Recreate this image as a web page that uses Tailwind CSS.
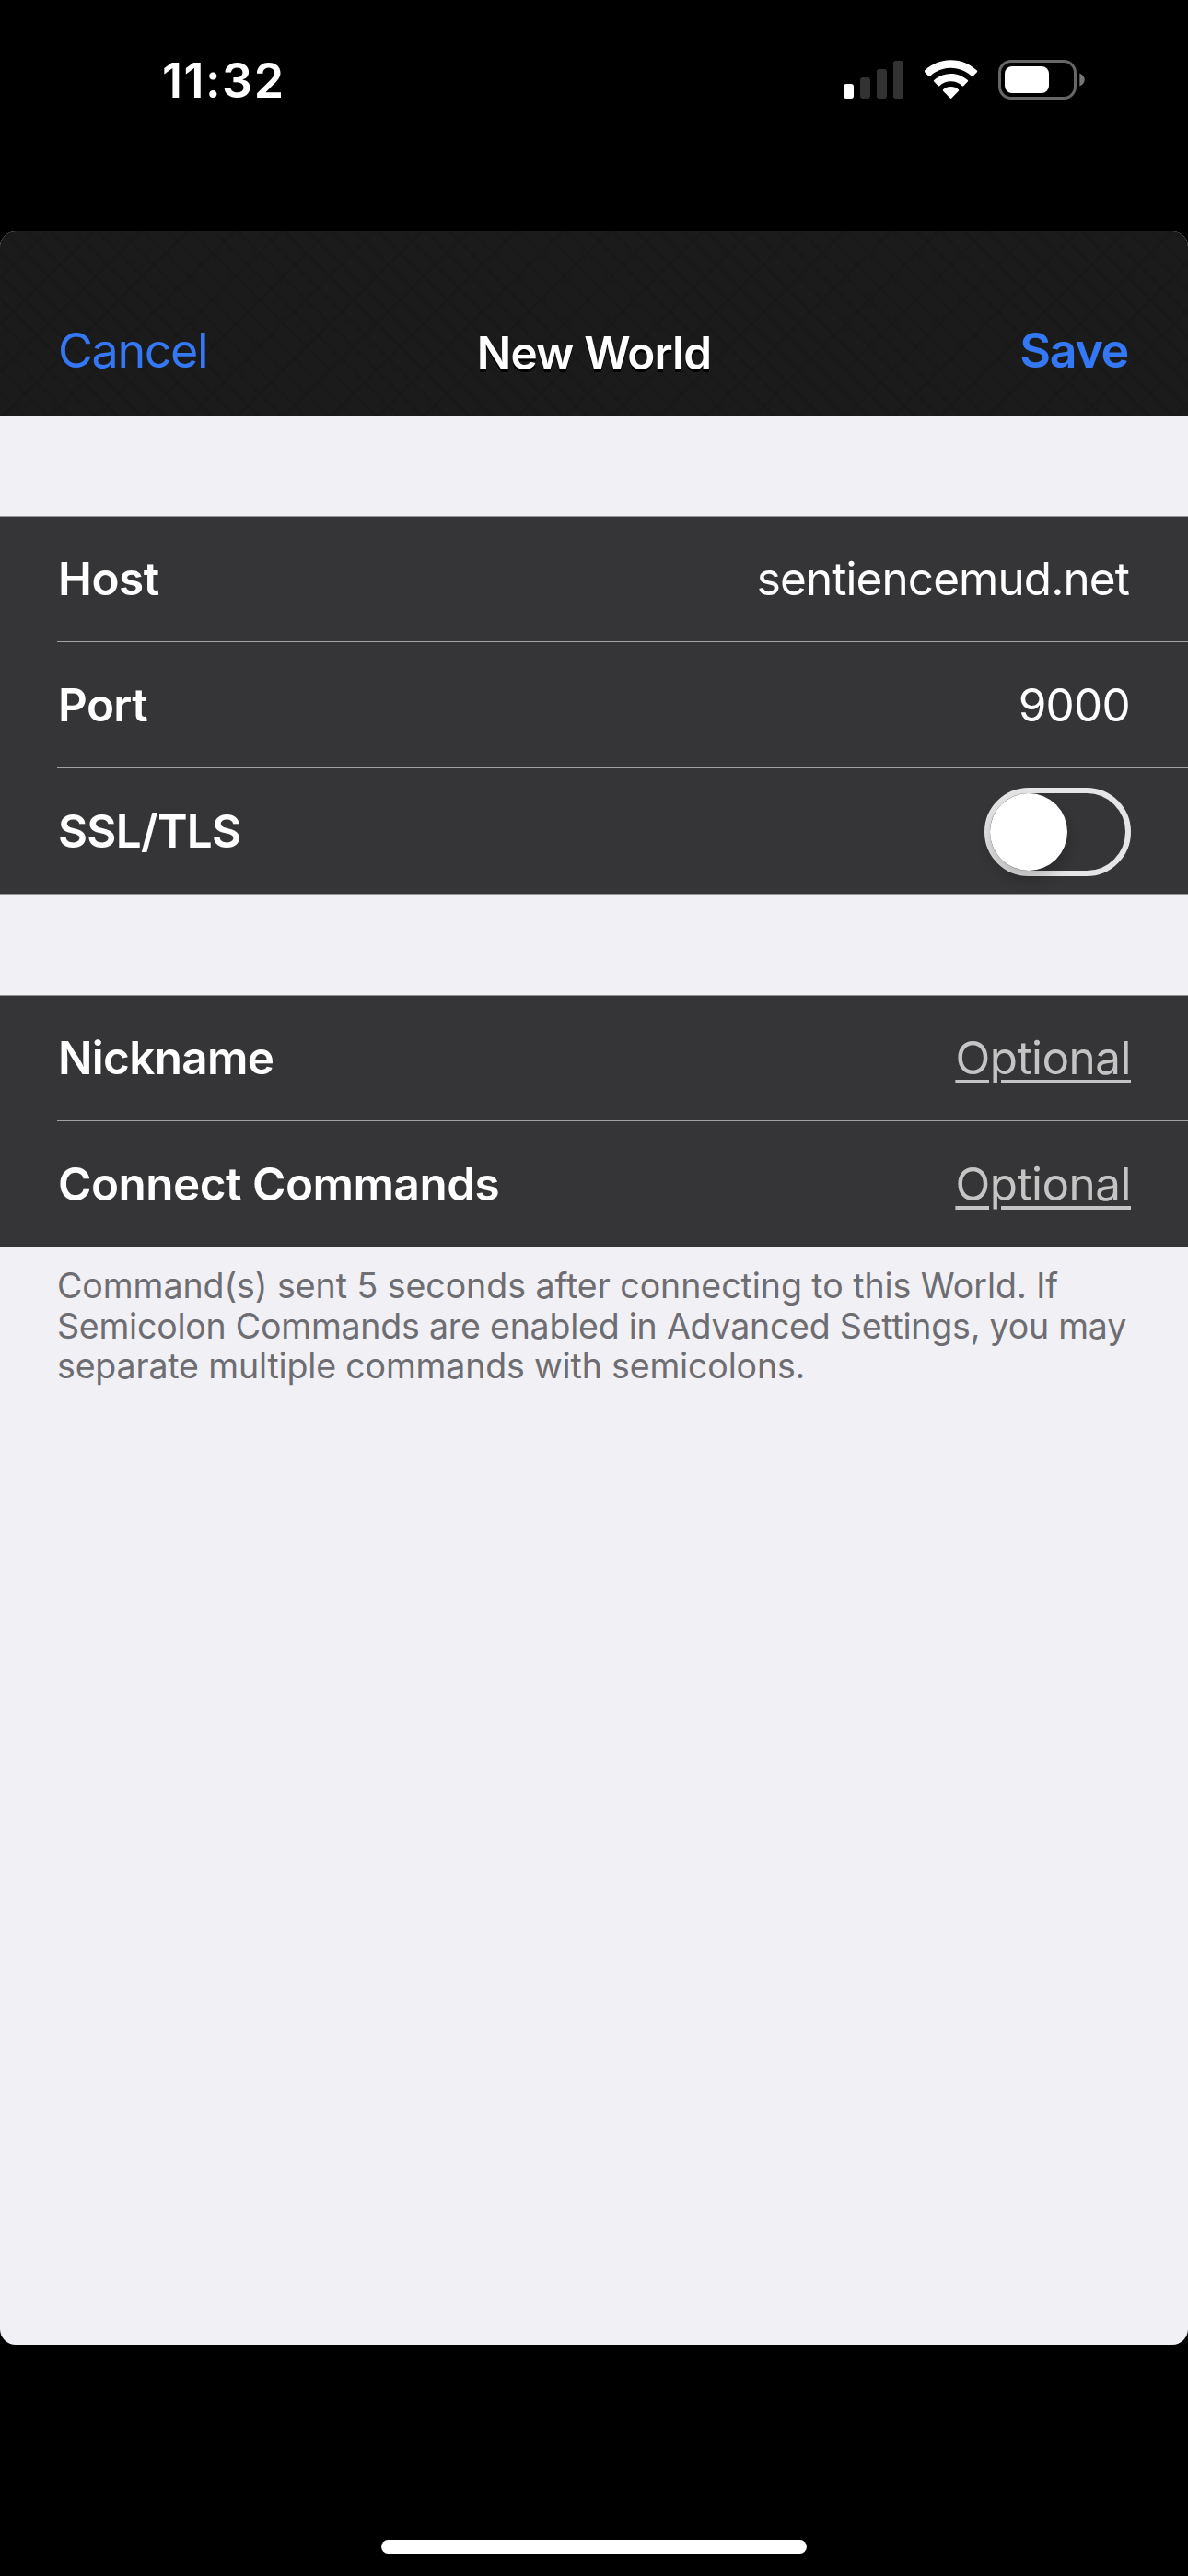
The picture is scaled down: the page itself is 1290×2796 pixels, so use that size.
<!DOCTYPE html>
<html lang="en">
<head>
<meta charset="utf-8">
<title>New World</title>
<script src="https://cdn.jsdelivr.net/npm/@tailwindcss/browser@4"></script>
</head>
<body class="bg-black font-['Inter',sans-serif]">
<div class="flex h-[2796px] w-[1290px] flex-col overflow-hidden bg-black">

  <!-- Status bar -->
  <div class="flex h-[176px] shrink-0 items-center justify-between pl-[176px] pr-[112px] text-white">
    <span class="text-[52px] font-semibold leading-[60px] tracking-[1.5px]">11:32</span>
    <div class="mb-[2px] flex h-11 items-start">
      <svg class="mr-[22px] h-11 w-[66px]" viewBox="0 0 66 44">
        <rect x="0" y="26" width="11" height="16" rx="3" fill="#fff"/>
        <rect x="18" y="19" width="11" height="23" rx="3" fill="#323232"/>
        <rect x="36" y="10" width="11" height="32" rx="3" fill="#323232"/>
        <rect x="54" y="1" width="11" height="41" rx="3" fill="#323232"/>
      </svg>
      <svg class="mr-[22px] h-11 w-[58px]" viewBox="0 0 58 44" fill="#fff">
        <path d="M28.500 0.200C39.800 0.200 49.600 4.600 56.900 11.600Q57.700 12.400 56.900 13.200L52.600 17.700Q51.900 18.400 51.100 17.700C45.200 12.200 37.300 8.700 28.500 8.700S11.800 12.200 5.900 17.700Q5.100 18.400 4.400 17.700L0.100 13.200Q-0.700 12.400 0.100 11.600C7.400 4.600 17.200 0.200 28.500 0.200Z"/>
        <path d="M28.500 14.900C35.700 14.900 42 17.600 46.800 22Q47.600 22.800 46.800 23.600L42.300 28.200Q41.600 28.900 40.800 28.200C37.500 25.200 33.200 23.300 28.500 23.300S19.500 25.200 16.200 28.200Q15.400 28.900 14.700 28.200L10.200 23.600Q9.400 22.800 10.200 22C15 17.600 21.300 14.900 28.500 14.900Z"/>
        <path d="M28.500 29C31.700 29 34.600 30.200 36.900 32.200Q37.700 33 36.900 33.800L29.300 41.500Q28.500 42.300 27.700 41.500L20.100 33.800Q19.300 33 20.100 32.200C22.400 30.200 25.300 29 28.500 29Z"/>
      </svg>
      <svg class="h-11 w-[94px]" viewBox="0 0 94 44">
        <rect x="1.500" y="1.500" width="82" height="40" rx="12.500" fill="none" stroke="#666" stroke-width="3"/>
        <rect x="7" y="7" width="48" height="29" rx="8" fill="#fff"/>
        <path d="M88.300 14.500C91.500 15.800 93.700 18.400 93.700 21.500S91.500 27.200 88.300 28.500Z" fill="#777"/>
      </svg>
    </div>
  </div>

  <!-- Modal sheet -->
  <main class="mt-[75px] flex h-[2294px] shrink-0 flex-col overflow-hidden rounded-[17px] bg-[#f1f0f5]">
    <header class="h-[200px] shrink-0 bg-[#1b1b1b] bg-[repeating-linear-gradient(45deg,rgba(0,0,0,0.1)_0px,transparent_3px,transparent_15px,rgba(0,0,0,0.1)_18px),repeating-linear-gradient(135deg,rgba(0,0,0,0.1)_0px,transparent_3px,transparent_33px,rgba(0,0,0,0.1)_36px)] pl-[63px] pr-[65px] pt-[98px]">
      <div class="grid h-[60px] grid-cols-[1fr_auto_1fr] items-center">
        <a class="text-[52px] leading-[60px] tracking-[-1.390px] text-[#3478f6]">Cancel</a>
        <h1 class="mt-1 pl-[2px] text-[49.400px] font-semibold leading-[60px] tracking-[-0.850px] text-white [text-shadow:0_3px_0_#000]">New World</h1>
        <a class="text-right text-[52px] font-semibold leading-[60px] tracking-[-1.360px] text-[#3478f6]">Save</a>
      </div>
    </header>
    <div class="h-px shrink-0 bg-[#b5b4b8]"></div>

    <!-- Connection -->
    <section class="mt-[108px] bg-[#353537] text-[49.400px] leading-[60px] text-white">
      <div class="h-px bg-[#96969a]"></div>
      <div class="flex h-[135px] items-center justify-between pb-px pl-[63px] pr-[64px]">
        <span class="font-semibold tracking-[-0.440px]">Host</span>
        <span class="tracking-[-0.880px]">sentiencemud.net</span>
      </div>
      <div class="ml-[62px] h-px bg-[#a2a2a5]"></div>
      <div class="flex h-[136px] items-center justify-between px-[63px]">
        <span class="font-semibold tracking-[-0.600px]">Port</span>
        <span class="tracking-[-0.700px]">9000</span>
      </div>
      <div class="ml-[62px] h-px bg-[#a2a2a5]"></div>
      <div class="flex h-[136px] items-center justify-between pl-[63px] pr-[62px]">
        <span class="font-semibold tracking-[-0.750px]">SSL/TLS</span>
        <svg class="mt-[2px] block h-24 w-[159px] overflow-visible" viewBox="0 0 159 96">
          <defs>
            <filter id="soft" x="-50%" y="-50%" width="200%" height="200%"><feGaussianBlur stdDeviation="8"/></filter>
          </defs>
          <rect x="3" y="3" width="153" height="90" rx="45" fill="none" stroke="#e5e5e5" stroke-width="6"/>
          <circle cx="48" cy="57" r="42" fill="#000" opacity=".2" filter="url(#soft)"/>
          <circle cx="48" cy="48" r="42" fill="#fff"/>
        </svg>
      </div>
      <div class="h-px bg-[#96969a]"></div>
    </section>

    <!-- Details -->
    <section class="mt-[109px] bg-[#353537] text-[49.400px] leading-[60px] text-white">
      <div class="h-px bg-[#8d918e]"></div>
      <div class="flex h-[135px] items-center justify-between pb-px pl-[63px] pr-[62px]">
        <span class="font-semibold tracking-[-0.670px]">Nickname</span>
        <span class="tracking-[-0.500px] text-[#c4c4c4] underline decoration-4 underline-offset-[6px]">Optional</span>
      </div>
      <div class="ml-[62px] h-px bg-[#a2a2a5]"></div>
      <div class="flex h-[136px] items-center justify-between pl-[63px] pr-[62px]">
        <span class="font-semibold tracking-[-0.470px]">Connect Commands</span>
        <span class="tracking-[-0.500px] text-[#c4c4c4] underline decoration-4 underline-offset-[6px]">Optional</span>
      </div>
      <div class="h-px bg-[#96969a]"></div>
    </section>

    <p class="flex flex-col whitespace-nowrap pl-[62px] pt-[20px] text-[37.500px] leading-[43.600px] text-[#6d6d72]">
      <span class="tracking-[-0.040px]">Command(s) sent 5 seconds after connecting to this World. If</span>
      <span class="tracking-[-0.220px]">Semicolon Commands are enabled in Advanced Settings, you may</span>
      <span class="tracking-[-0.150px]">separate multiple commands with semicolons.</span>
    </p>
  </main>

  <!-- Home indicator -->
  <div class="mx-auto mt-[212px] h-[15px] w-[462px] shrink-0 rounded-full bg-white"></div>
</div>
</body>
</html>
